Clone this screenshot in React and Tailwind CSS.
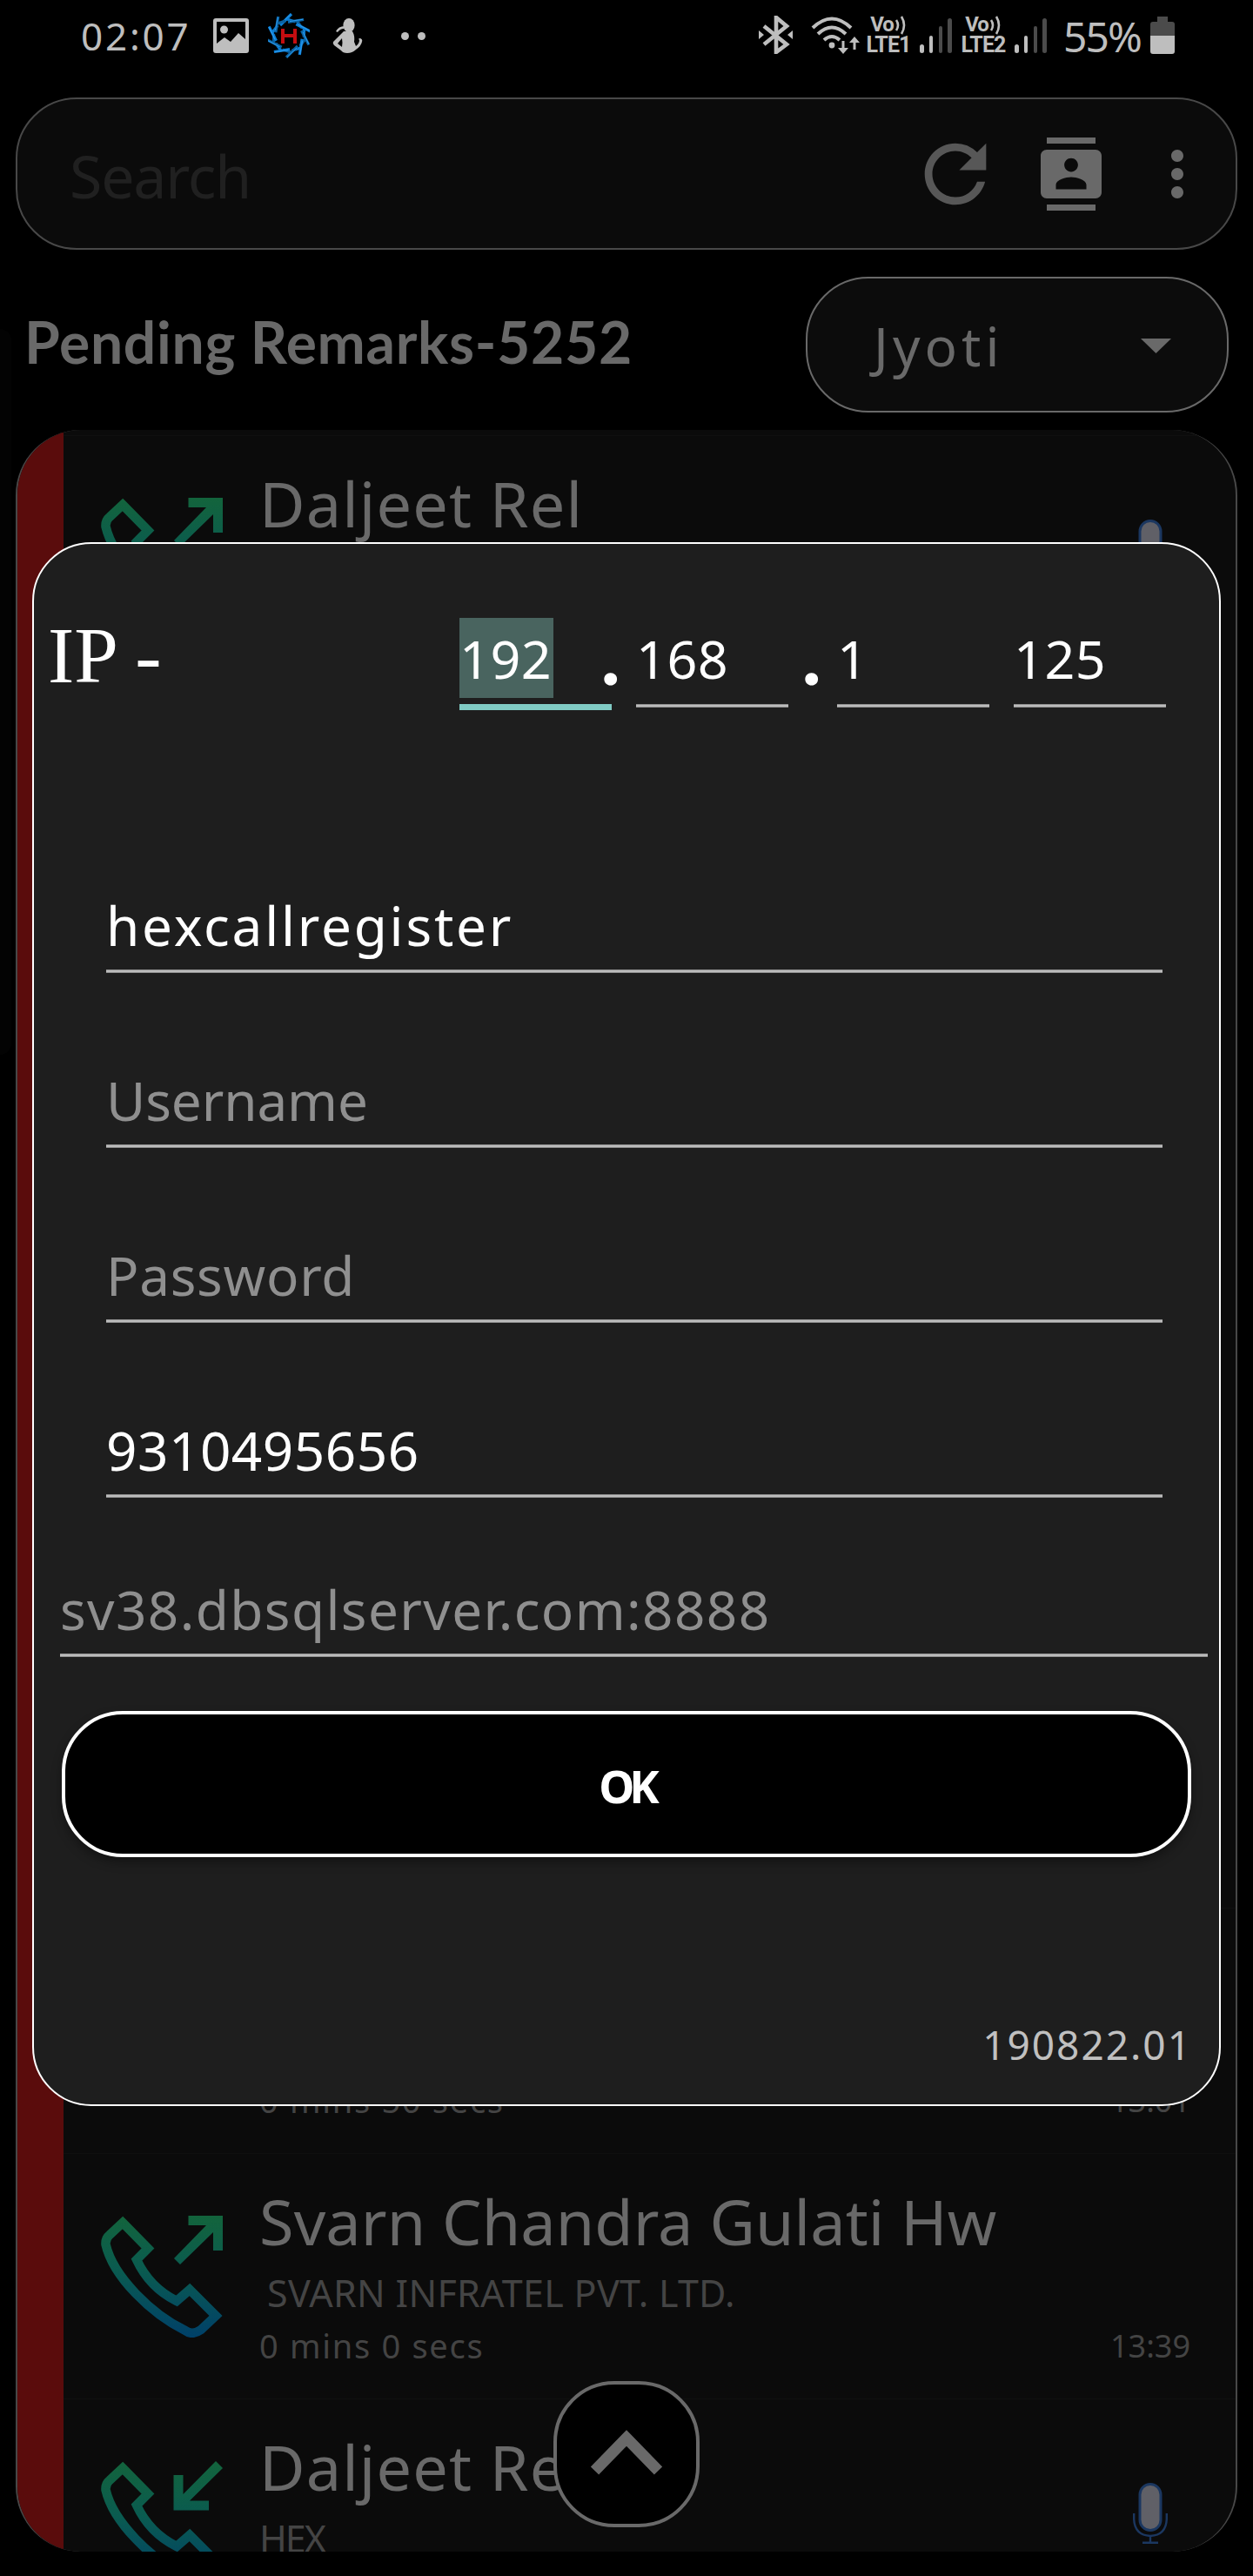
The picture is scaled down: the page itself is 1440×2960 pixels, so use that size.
import React from "react";
import { MdRefresh, MdContacts, MdMoreVert } from "react-icons/md";

function ImageIcon() {
  return (
    <svg className="h-[40px] w-[41px] shrink-0" viewBox="0 0 41 40" fill="#bebebe">
      <path fillRule="evenodd" d="M3 0H38Q41 0 41 3V37Q41 40 38 40H3Q0 40 0 37V3Q0 0 3 0ZM4 4V29L13 22L20 27L29 17L37 24V4Z" />
      <circle cx="12.5" cy="13" r="4.5" />
    </svg>
  );
}

const blades = [0, 36, 72, 108, 144, 180, 216, 252, 288, 324];

function HexLogo() {
  return (
    <svg className="h-[52px] w-[48px] shrink-0" viewBox="0 0 48 52">
      {blades.map((a, i) => (
        <g key={a} transform={`rotate(${a} 24 26)`} fill="none">
          <path d="M14 14L27 1M22 7L31 10" stroke={i % 2 ? "#0a62a2" : "#0c7fd6"} strokeWidth="3.2" />
          <path d="M15 12L26 1.500" stroke="#2f9df0" strokeWidth="1" />
        </g>
      ))}
      <path d="M17 18V35M31 18V35M17 26H31" stroke="#c40d10" strokeWidth="4" fill="none" />
    </svg>
  );
}

function FigureIcon() {
  return (
    <svg className="h-[40px] w-[36px] shrink-0" viewBox="0 0 36 40" fill="#bebebe">
      <ellipse cx="19" cy="8" rx="6.6" ry="8" />
      <path d="M4 15Q7 9 14 9L13 12Q9 12 6 16Z" />
      <path fillRule="evenodd" d="M13 15H23Q26 20 25 27L27 32Q31 29 31 25Q29 23 32 23Q35 24 34 27Q33 32 27 36Q23 40 17 40Q12 40 10 37L2 31Q0 29 1 27ZM11 23L6 29L11 33Q12 28 11 23Z" />
    </svg>
  );
}

function BluetoothIcon() {
  return (
    <svg className="h-[44px] w-[39px] shrink-0" viewBox="0 0 39 44">
      <path d="M6 12L32 33L20 42V2L32 12L6 33" fill="none" stroke="#bebebe" strokeWidth="4.6" />
      <path d="M0 17L6 22L0 27ZM39 17L33 22L39 27Z" fill="#bebebe" />
    </svg>
  );
}

function WifiIcon() {
  return (
    <svg className="h-[44px] w-[58px] shrink-0" viewBox="0 0 58 44" fill="none" stroke="#bebebe" strokeWidth="4">
      <path d="M2 13Q24 -8 46 13M8 20Q24 5 40 20M15 27Q24 19 33 27" />
      <circle cx="24" cy="33" r="3.4" fill="#bebebe" stroke="none" />
      <path d="M37 28V40M50 26V38" strokeWidth="3" />
      <path d="M31 36H43L37 43ZM44 30H56L50 23Z" fill="#bebebe" stroke="none" />
    </svg>
  );
}

function Volte({ label }) {
  return (
    <div className="flex w-[54px] shrink-0 flex-col items-center font-['Roboto','Liberation_Sans',sans-serif] text-[25px] leading-[24px] font-bold text-[#bebebe]">
      <span className="flex h-[23px] items-center gap-px text-[24px] leading-[23px] tracking-[-1px]">
        Vo
        <svg className="h-[23px] w-[14px]" viewBox="0 0 14 23" fill="none" stroke="#bebebe" strokeWidth="2.6">
          <path d="M2 6Q6 12 2 18M8 2Q14 12 8 22" />
        </svg>
      </span>
      <span className="tracking-[-0.9px]">{label}</span>
    </div>
  );
}

function Signal() {
  return (
    <div className="flex h-[40px] w-[37px] shrink-0 items-end justify-between">
      <i className="h-[10px] w-[4.5px] rounded-sm bg-[#bebebe]" />
      <i className="h-[20px] w-[4.5px] rounded-sm bg-[#bebebe]" />
      <i className="h-[31px] w-[4.5px] rounded-sm bg-[#4b4b4b]" />
      <i className="h-[40px] w-[4.5px] rounded-sm bg-[#4b4b4b]" />
    </div>
  );
}

function StatusBar() {
  return (
    <div className="flex h-[112px] items-start pt-[15px] pr-[90px] pl-[93px] text-[#bebebe]">
      <span className="w-[152px] text-[44px] leading-[1.2] tracking-[2.8px]">02:07</span>
      <div className="mt-[6px]"><ImageIcon /></div>
      <div className="ml-[22px]"><HexLogo /></div>
      <div className="mt-[6px] ml-[26px]"><FigureIcon /></div>
      <i className="mt-[22px] ml-[43px] size-[9px] rounded-full bg-[#bebebe]" />
      <i className="mt-[22px] ml-[10px] size-[9px] rounded-full bg-[#bebebe]" />
      <div className="ml-auto flex items-start">
        <div className="mt-[3px]"><BluetoothIcon /></div>
        <div className="mt-[4px] ml-[21px]"><WifiIcon /></div>
        <div className="mt-[2px] ml-[4px]"><Volte label="LTE1" /></div>
        <div className="mt-[6px] ml-[9px]"><Signal /></div>
        <div className="mt-[2px] ml-[9px]"><Volte label="LTE2" /></div>
        <div className="mt-[6px] ml-[9px]"><Signal /></div>
        <span className="-mt-[2px] ml-[19px] w-[90px] text-[48px] leading-[1.2] tracking-[-2px]">55%</span>
        <div className="mt-[4px] ml-[10px] flex w-[28px] flex-col items-center">
          <i className="h-[6px] w-[12px] bg-[#4b4b4b]" />
          <i className="h-[16px] w-full rounded-t-[3px] bg-[#4b4b4b]" />
          <i className="h-[21px] w-full rounded-b-[3px] bg-[#bebebe]" />
        </div>
      </div>
    </div>
  );
}

function CallIcon({ incoming }) {
  return (
    <svg className="mt-[71px] ml-[43px] h-[140px] w-[140px] shrink-0" viewBox="0 0 140 140">
      <defs>
        <linearGradient id="call" gradientUnits="userSpaceOnUse" x1="0" y1="0" x2="0" y2="140">
          <stop offset="0" stopColor="#13643c" />
          <stop offset="0.45" stopColor="#0a5b50" />
          <stop offset="1" stopColor="#004069" />
        </linearGradient>
      </defs>
      <path
        d="M25 8L54 37.5L41 50.5C50 70 65 87 87 98L102 85L132 115L115 131Q105 138 97 132C58 113 14 70 5.5 33Q5 26 10 22Z"
        fill="none"
        stroke="url(#call)"
        strokeWidth="10.5"
      />
      <path
        d={incoming ? "M83.5 16H94.5V38L132 0L140 8L102 45.5H124V56.5H83.5Z" : "M100.5 0H140V40H129V19L91 56L84 49L121 11H100.5Z"}
        fill="url(#call)"
      />
    </svg>
  );
}

function MicIcon() {
  return (
    <svg className="h-[70px] w-[40px]" viewBox="0 0 40 70" fill="none" stroke="#1b3760" strokeWidth="2.4">
      <rect x="8" y="1.5" width="24" height="53" rx="12" fill="#606067" strokeWidth="3" />
      <path d="M1.2 35V42Q2 60 20 61Q38 60 38.8 42V35M20 61V68M11 68.8H29" />
    </svg>
  );
}

function CallRow({ name, nameClass, company, companyClass, duration, time, incoming, mic }) {
  return (
    <div className="flex h-[282px] shrink-0 items-start border-t border-[#101010]">
      <CallIcon incoming={incoming} />
      <div className="ml-[42px] flex flex-col whitespace-nowrap">
        <span className={"mt-[34px] h-[87px] text-[72px] leading-[1.2] text-[#696969] " + nameClass}>{name}</span>
        <span className={"mt-[13px] h-[52px] text-[43px] leading-[1.2] text-[#444444] " + companyClass}>{company}</span>
        <span className="mt-[12px] h-[46px] text-[38px] leading-[1.2] tracking-[1.7px] text-[#444444]">{duration}</span>
      </div>
      <div className="ml-auto flex w-[120px] flex-col items-end pr-[52px]">
        <div className="mt-[96px] mr-[26px] h-[70px]">{mic && <MicIcon />}</div>
        <span className="mt-[33px] text-[36px] leading-[1.2] text-[#444444]">{time}</span>
      </div>
    </div>
  );
}

function CallList() {
  return (
    <div className="mr-[18px] ml-[18px] flex h-[2438px] overflow-hidden rounded-[75px] border-x-2 border-[#484848] bg-[#0b0b0b]">
      <div className="w-[53px] shrink-0 bg-[#5a0c0c]" />
      <div className="flex grow flex-col pt-[6px]">
        <CallRow name="Daljeet Rel" nameClass="tracking-[1.1px]" mic />
        <div className="h-[1410px] shrink-0" />
        <CallRow duration="0 mins 50 secs" time="13:01" />
        <CallRow
          name="Svarn Chandra Gulati Hw"
          nameClass="tracking-[0.1px]"
          company="SVARN INFRATEL PVT. LTD."
          companyClass="pl-[9px] tracking-[0.3px]"
          duration="0 mins 0 secs"
          time="13:39"
        />
        <CallRow name="Daljeet Rel" nameClass="tracking-[1.1px]" company="HEX" companyClass="tracking-[-2px]" incoming mic />
      </div>
    </div>
  );
}

function Underline() {
  return <div className="h-[4px] border-y border-[#929292] bg-[#bcbcbc]" />;
}

function IpCell({ value, focused, className }) {
  return (
    <div className={"w-[175px] shrink-0 " + className}>
      <div className={focused ? "w-[108px] bg-[#49645f] pt-[10px] pb-[9px]" : "pt-[10px] pb-[9px]"}>
        <span className="block text-[61px] leading-[73px] tracking-[0.5px] text-white">{value}</span>
      </div>
      <div className="mt-[7px]">{focused ? <div className="h-[7px] bg-[#80cbc4]" /> : <Underline />}</div>
    </div>
  );
}

function Dot({ className }) {
  return <span className={"-mt-[12px] shrink-0 font-['Lato',sans-serif] text-[90px] leading-[1.2] font-black text-white " + className}>.</span>;
}

function Field({ children, className }) {
  return (
    <div className={"h-[92px] " + className}>
      <div className="mb-[14px] h-[74px] text-[62px] leading-[1.2] whitespace-nowrap">{children}</div>
      <Underline />
    </div>
  );
}

function Dialog() {
  return (
    <div className="absolute top-[623px] left-[37px] flex h-[1797px] w-[1366px] flex-col rounded-[68px] border-2 border-white bg-[#1e1e1e]">
      <div className="mt-[85px] flex h-[106px] items-start">
        <span className="-mt-[11px] ml-[16px] w-[473px] font-['Liberation_Serif',serif] text-[91px] leading-[1.2] text-white">IP -</span>
        <IpCell value="192" focused className="" />
        <Dot className="-ml-[12px] w-[40px]" />
        <IpCell value="168" className="" />
        <Dot className="w-[56px] pl-[16px]" />
        <IpCell value="1" className="" />
        <IpCell value="125" className="ml-[28px]" />
      </div>
      <div className="mt-[210px] mr-[65px] ml-[81px] flex flex-col gap-[109px] pl-[2px]">
        <Field className="tracking-[2.8px] text-white">hexcallregister</Field>
        <Field className="tracking-[-0.1px] text-[#8f8f8f]">Username</Field>
        <Field className="tracking-[0.7px] text-[#8f8f8f]">Password</Field>
        <Field className="tracking-[0.5px] text-white">9310495656</Field>
      </div>
      <Field className="mt-[91px] mr-[13px] ml-[30px] tracking-[1.4px] text-[#8f8f8f]">sv38.dbsqlserver.com:8888</Field>
      <button className="mt-[62px] mr-[32px] ml-[32px] flex h-[168px] items-center justify-center rounded-[70px] border-4 border-white bg-black pt-[3px] text-[52px] leading-none font-bold tracking-[-6px] text-white shadow-[0_6px_12px_rgba(0,0,0,0.35)]">
        OK
      </button>
      <div className="mt-[188px] mr-[31px] text-right text-[46px] leading-[1.2] tracking-[2px] text-[#c0c0c0]">190822.01</div>
    </div>
  );
}

export default function App() {
  return (
    <div className="relative h-[2960px] w-[1440px] overflow-hidden bg-black font-['Noto_Sans','Open_Sans',sans-serif]">
      <StatusBar />
      <div className="mx-[18px] flex h-[175px] items-center rounded-[70px] border-2 border-[#484848] bg-[#0b0b0b] pl-[60px]">
        <span className="mt-[4px] text-[68px] leading-[1.2] tracking-[-1.2px] text-[#202020]">Search</span>
        <MdRefresh className="ml-auto size-[106px] shrink-0 text-[#575757]" />
        <MdContacts className="ml-[38px] size-[84px] shrink-0 text-[#696969]" />
        <MdMoreVert className="mr-[25px] ml-[38px] size-[84px] shrink-0 text-[#696969]" />
      </div>
      <div className="flex h-[207px] items-start pr-[28px] pl-[28px]">
        <span className="mt-[66px] font-['Lato',sans-serif] text-[66px] leading-[1.2] font-bold tracking-[0.7px] whitespace-nowrap text-[#696969]">Pending Remarks-5252</span>
        <div className="mt-[31px] ml-auto flex h-[156px] w-[486px] items-start justify-between rounded-[72px] border-2 border-[#696969] bg-[#0c0c0c] pr-[64px] pl-[76px]">
          <span className="mt-[40px] text-[62px] leading-[1.2] tracking-[5px] text-[#696969]">Jyoti</span>
          <svg className="mt-[69px] h-[17px] w-[35px]" viewBox="0 0 35 17" fill="#696969"><path d="M0 0H35L17.5 17Z" /></svg>
        </div>
      </div>
      <CallList />
      <div className="absolute top-[378px] left-0 h-[834px] w-[13px] rounded-r-[13px] bg-[#030303]" />
      <div className="absolute top-[2736px] left-[636px] flex size-[168px] items-center justify-center rounded-[70px] border-4 border-[#696969] bg-black">
        <svg className="h-[56px] w-[84px]" viewBox="678 2792 84 56"><path d="M683.5 2839L720 2801.5L756.500 2839" fill="none" stroke="#696969" strokeWidth="13" /></svg>
      </div>
      <Dialog />
    </div>
  );
}
